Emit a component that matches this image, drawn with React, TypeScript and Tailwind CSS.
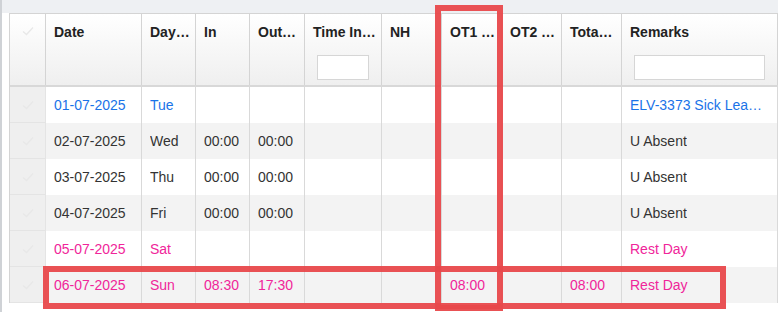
import * as React from "react"

interface Row {
  date: string
  day: string
  inTime: string
  outTime: string
  ot1: string
  total: string
  remarks: string
  tone: "blue" | "pink" | "normal"
}

const rows: Row[] = [
  { date: "01-07-2025", day: "Tue", inTime: "", outTime: "", ot1: "", total: "", remarks: "ELV-3373 Sick Leave (Full Day)", tone: "blue" },
  { date: "02-07-2025", day: "Wed", inTime: "00:00", outTime: "00:00", ot1: "", total: "", remarks: "U Absent", tone: "normal" },
  { date: "03-07-2025", day: "Thu", inTime: "00:00", outTime: "00:00", ot1: "", total: "", remarks: "U Absent", tone: "normal" },
  { date: "04-07-2025", day: "Fri", inTime: "00:00", outTime: "00:00", ot1: "", total: "", remarks: "U Absent", tone: "normal" },
  { date: "05-07-2025", day: "Sat", inTime: "", outTime: "", ot1: "", total: "", remarks: "Rest Day", tone: "pink" },
  { date: "06-07-2025", day: "Sun", inTime: "08:30", outTime: "17:30", ot1: "08:00", total: "08:00", remarks: "Rest Day", tone: "pink" },
]

const cols = "grid grid-cols-[36px_96px_54px_54px_55px_77px_60px_60px_60px_60px_156px]"

const toneClass = {
  blue: "text-[#1a73e8]",
  pink: "text-[#f0259a]",
  normal: "text-[#333333]",
}

const Check = () => (
  <svg width="12" height="10" viewBox="0 0 12 10" className="mx-auto">
    <path d="M1 5.5 L4.5 8.5 L11 1.5" fill="none" stroke="#e8e8e8" strokeWidth="1.3" />
  </svg>
)

const HeadCell = ({ label, filter }: { label?: string; filter?: boolean }) => (
  <div className="border-r border-[#d4d4d4] px-2 pt-[10px] flex flex-col min-w-0">
    <div className="h-4 leading-4 font-bold text-[14px] text-[#222] whitespace-nowrap">{label}</div>
    {filter && <div className="mt-[15px] mx-[4px] h-[25px] bg-white border border-[#d6d6d6]" />}
  </div>
)

export default function App() {
  return (
    <div className="relative w-[778px] h-[312px] bg-white overflow-hidden font-['Liberation_Sans',Arial,sans-serif]">
      <div className="border-l-2 border-[#cfd2d6] h-full">
        <div className="h-[13px] bg-[#eef0f3]" />
        <div className="ml-[7px] border-l border-t border-[#d4d4d4]">
          <div className={`${cols} h-[73px] bg-gradient-to-b from-white to-[#efefef] border-b-2 border-[#d8d8d8]`}>
            <div className="border-r border-[#d4d4d4] pt-[12px]"><Check /></div>
            <HeadCell label="Date" />
            <HeadCell label="Day…" />
            <HeadCell label="In" />
            <HeadCell label="Out…" />
            <HeadCell label="Time In…" filter />
            <HeadCell label="NH" />
            <HeadCell label="OT1 …" />
            <HeadCell label="OT2 …" />
            <HeadCell label="Tota…" />
            <HeadCell label="Remarks" filter />
          </div>
          {rows.map((r, i) => (
            <div
              key={r.date}
              className={`${cols} h-[36px] text-[14px] ${toneClass[r.tone]} ${i % 2 === 1 ? "bg-[#f3f3f3]" : "bg-white"}`}
            >
              <div className="bg-[#efefef] border-r border-[#d4d4d4] flex items-center border-b border-[#e4e4e4]"><Check /></div>
              {[r.date, r.day, r.inTime, r.outTime, "", "", r.ot1, "", r.total, r.remarks].map((v, j) => (
                <div key={j} className="border-r border-[#d9d9d9] px-2 flex items-center min-w-0">
                  <span className="truncate">{v}</span>
                </div>
              ))}
            </div>
          ))}
        </div>
      </div>
      <div className="absolute left-[435px] top-[5px] w-[68px] h-[306px] border-[6px] border-[#e8484b]/95" />
      <div className="absolute left-[43px] top-[266px] w-[683px] h-[43px] border-[6px] border-[#e8484b]/95" />
    </div>
  )
}
